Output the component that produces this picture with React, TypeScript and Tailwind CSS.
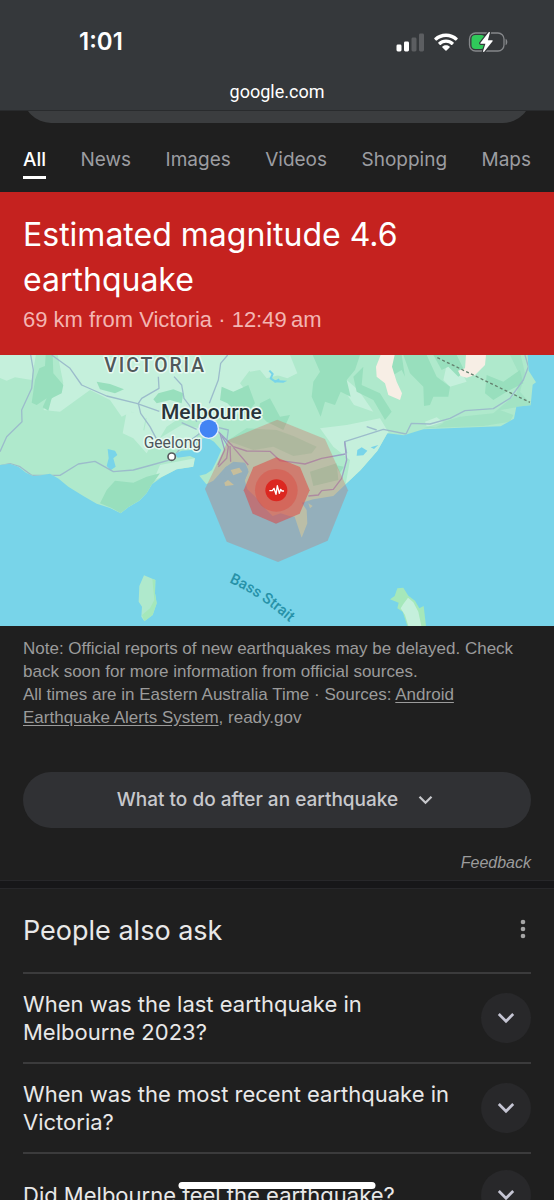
import React from "react";

const tabs = ["All", "News", "Images", "Videos", "Shopping", "Maps"];

const questions = [
  "When was the last earthquake in Melbourne 2023?",
  "When was the most recent earthquake in Victoria?",
  "Did Melbourne feel the earthquake?",
];

function Chevron({ className }: { className: string }) {
  return (
    <svg viewBox="0 0 18 12" className={className} fill="none" stroke="currentColor" strokeWidth="2.7" aria-hidden="true">
      <path d="M1.8 2 9 9.3 16.2 2" />
    </svg>
  );
}

function StatusIcons() {
  return (
    <div className="flex items-center gap-2.5">
      <svg viewBox="0 0 28 19" className="h-[19px] w-7" aria-hidden="true">
        <rect x="0.500" y="11.5" width="5" height="7" rx="1.4" fill="#fff" />
        <rect x="8" y="8.5" width="5" height="10" rx="1.4" fill="#fff" />
        <rect x="15.500" y="4.5" width="5" height="14" rx="1.4" fill="#5c5e61" />
        <rect x="23" y="0.5" width="5" height="18" rx="1.4" fill="#5c5e61" />
      </svg>
      <svg viewBox="0 0 24 18" className="h-[18px] w-6" fill="#fff" aria-hidden="true">
        <path d="M12 .6C7.5.6 3.400 2.300.4 5.100c-.3.3-.3.600 0 .9l1.500 1.500c.2.2.6.2.9 0C5.300 5.200 8.500 3.900 12 3.900s6.700 1.300 9.200 3.600c.3.2.7.2.9 0L23.600 6c.3-.3.3-.6 0-.9C20.600 2.300 16.500.6 12 .6z" />
        <path d="M12 6.400c-3 0-5.700 1.100-7.700 3-.3.3-.3.600 0 .9l1.600 1.600c.2.2.6.2.9 0C8.200 10.600 10 9.800 12 9.800s3.800.8 5.200 2.100c.3.2.7.2.9 0l1.600-1.600c.3-.3.3-.6 0-.9-2-1.900-4.700-3-7.700-3z" />
        <path d="M12 12.200c-1.400 0-2.600.5-3.600 1.300-.3.3-.3.600 0 .9l3.100 3.100c.3.3.7.3 1 0l3.100-3.100c.3-.3.3-.6 0-.9-1-.8-2.200-1.300-3.600-1.300z" />
      </svg>
      <svg viewBox="0 0 40 20" className="h-5 w-10" aria-hidden="true">
        <rect x="1.500" y="1" width="34.500" height="18" rx="6" fill="none" stroke="#85878a" strokeWidth="1.300" />
        <path d="M37.600 6.800c1.100.5 1.700 1.700 1.700 3.200s-.6 2.700-1.700 3.200z" fill="#85878a" />
        <rect x="3.500" y="3" width="13.500" height="14" rx="4" fill="#30c85a" />
        <path d="M20.700.2 12.500 10.800c-.4.500-.1 1 .5 1h4.400l-2.300 7.200c-.3.900.6 1.300 1.100.7l8.400-10.500c.4-.5.1-1-.5-1h-4.200L21.800 1C22.100.1 21.300-.4 20.700.2z" fill="#fff" stroke="#35383b" strokeWidth="2.400" paintOrder="stroke" />
      </svg>
    </div>
  );
}

function QuakeMap() {
  return (
    <svg
      viewBox="0 15 1662 813"
      className="block h-auto w-full bg-[#78d4e9]"
      role="img"
      aria-label="Map of Victoria"
      fontFamily="Roboto, sans-serif"
      strokeLinejoin="round"
    >
      <defs>
        <clipPath id="land">
          <path d="M0 0V345L30 341 55 350 78 368 100 378 122 376 150 371 176 386 205 410 250 438 290 461 330 474 362 490 385 472 418 452 440 430 456 403 485 382 530 358 580 350 585 325 570 318 533 323 524 312 545 302 578 300 592 270 620 262 642 275 664 300 650 332 636 360 618 372 598 377 619 403 640 392 676 352 700 335 733 338 746 365 734 390 742 418 766 440 790 470 818 498 842 490 868 498 884 500 905 563 922 520 920 480 905 458 940 448 1000 438 1037 403 1082 360 1132 303 1162 250 1212 256 1270 238 1382 233 1502 229 1542 206 1549 170 1592 166 1598 104 1608 97 1586 62 1582 0Z" />
        </clipPath>
      </defs>
      <g clipPath="url(#land)">
        <rect x="0" y="0" width="1662" height="600" fill="#afe9cc" />
        <g fill="#c5f0dc">
          <path d="M0 0H110L95 90 45 82 20 92 0 84Z" />
          <path d="M170 0H720L750 60 720 100 760 150 720 190 650 200 560 190 500 230 470 280 430 255 440 205 395 185 365 200 330 150 270 120 180 185 130 180 160 140 190 100Z" />
          <path d="M380 185 440 190 430 240 465 265 440 310 400 265 368 250Z" />
          <path d="M545 225 600 235 580 290 520 300 470 270Z" />
          <path d="M480 345 585 325 580 352 530 360 460 392Z" />
          <path d="M720 15H850L838 75 800 85 780 60 750 65Z" />
          <path d="M822 15H870L892 70 862 85 830 75Z" />
          <path d="M1040 90 1075 120 1120 185 1062 165 1036 125Z" />
          <path d="M960 235 1040 225 1140 205 1166 248 1135 300 1080 365 1037 403 1050 330 1000 290Z" />
          <path d="M1275 215 1310 202 1332 218 1308 232 1280 228Z" />
          <path d="M1340 45 1380 60 1400 95 1350 110 1330 90Z" />
        </g>
        <g fill="#98dfbd">
          <path d="M137 15H158L160 70 190 105 185 130 155 145 145 182 128 172 140 145 110 165 95 158 105 90 118 55 135 48Z" />
          <path d="M290 95 330 102 372 118 345 130 300 118Z" />
          <path d="M475 130 520 118 550 130 545 160 510 150 470 160 460 148Z" />
          <path d="M665 110 700 125 745 105 765 160 745 185 705 182 682 160 660 150Z" />
          <path d="M345 392 400 398 440 380 480 370 455 405 440 430 418 452 385 472 362 490 335 474 300 460 320 420Z" />
          <path d="M780 160 810 145 840 200 870 195 850 240 800 215 775 190Z" />
          <path d="M938 15H1080L1065 60 1040 90 1052 140 1022 125 1005 165 975 155 962 200 935 140 940 95 960 65Z" />
          <path d="M1060 80 1090 50 1085 105 1140 130 1175 185 1155 210 1120 150 1070 125Z" />
          <path d="M1160 15 1205 15 1215 80 1205 60 1180 75Z" />
          <path d="M1210 15H1280L1310 80 1350 110 1345 140 1300 140 1290 165 1272 168 1270 110 1230 70Z" />
          <path d="M1300 15H1370L1395 65 1375 80 1345 50 1325 60Z" />
          <path d="M1460 75 1510 95 1560 60 1570 100 1520 125 1480 150 1455 130Z" />
          <path d="M1530 15H1562L1575 70 1560 125 1595 165 1550 172 1500 180 1540 195 1530 215 1450 228 1382 230 1270 235 1380 200 1480 190 1550 130 1562 80Z" opacity=".55" />
          <path d="M682 272 740 235 830 240 880 258 950 290 935 310 880 318 820 290 760 300Z" opacity=".8" />
          <path d="M930 365 1010 340 1015 390 940 408Z" />
          <path d="M1005 345 1032 350 1020 368Z" />
        </g>
        <g fill="#f7eee5">
          <path d="M1142 15H1184L1176 50 1190 95 1206 130 1200 150 1165 135 1155 100 1130 80 1128 50Z" />
          <path d="M1398 15H1458L1455 45 1425 75 1400 83 1382 78 1374 62 1395 55Z" />
        </g>
        <g fill="#78d4e9">
          <path d="M323 297 345 302 352 315 340 325 347 350 332 361 320 348 326 325Z" />
          <path d="M1072 300 1085 292 1102 302 1090 316 1070 317Z" />
          <path d="M1112 292 1135 285 1122 297Z" />
          <path d="M822 90 862 92 850 98 822 97Z" />
        </g>
        <path d="M808 62 818 72 812 85 826 95 838 88" fill="none" stroke="#78d4e9" strokeWidth="6" />
        <g fill="none" stroke="#9cbccb" strokeWidth="4">
          <path d="M92 15 100 60 95 115 65 180 66 215 20 260 0 305" />
          <path d="M155 15 210 55 245 105 320 138 410 160 478 184" />
          <path d="M475 80 477 115 425 145 415 160 422 190 450 230 470 268" />
          <path d="M522 80 545 105 552 145 575 175 590 215" />
          <path d="M683 15 662 40 655 90 628 160" />
          <path d="M0 347 30 341 60 350 95 376 180 376 235 342 285 334 340 365 400 360 455 345 515 328 545 290 600 250" />
          <path d="M545 218 590 238M645 230 685 240 680 275" />
          <path d="M1040 310 1034 275 1150 238 1218 252 1234 220 1290 222 1350 205 1395 182 1480 176 1530 145 1570 90 1585 50 1575 15" />
          <path d="M1100 230 1130 240" />
        </g>
        <g fill="none" stroke="#9c9fc4" strokeWidth="4">
          <path d="M650 240 700 290 740 303 810 304 840 332 915 342 965 325 1036 312" />
          <path d="M1034 275 1040 330 1025 385 1000 418 965 422 955 435 925 438" />
          <path d="M665 258 685 290 680 325 655 350" />
          <path d="M660 250 674 300 654 345M690 288 692 335M700 292 745 345" />
        </g>
      </g>

      <path d="M676 352 700 340 735 338 745 360 732 400 700 380 672 388Z" fill="#78d4e9" />
      <path d="M692 360 718 353 727 366 700 376ZM673 398 684 390 702 405 676 408Z" fill="#c0e9bc" />
      <path d="M925 460 938 468 930 475ZM778 410 790 432 770 425Z" fill="#afe9cc" />
      <path d="M1312 23 1590 157" fill="none" stroke="#64816f" strokeWidth="4" strokeDasharray="9 7" />

      <path d="M432 676 466 690 465 730 470 760 458 795 433 814 424 800 426 770 416 755 418 708Z" fill="#afe9cc" />
      <path d="M457 686 466 690 465 730 470 760 458 795 433 814 426 795 450 775 463 750Z" fill="#a5e8ba" />
      <path d="M1192 715 1210 713 1225 737 1245 752 1258 775 1271 768 1278 828H1222L1208 785 1192 775 1196 758 1170 748 1184 738Z" fill="#a5e8ba" />
      <path d="M1224 743 1240 757 1255 785 1264 828H1225L1215 795 1202 775 1210 762Z" fill="#c5f0dc" />

      <path d="M832 209 975 267 1044 421 983 572 834 636 680 575 615 417 685 270Z" fill="#d8574c" fillOpacity=".29" />
      <path d="M829 322 900 351 929 421 899 491 828 521 758 491 731 421 760 351Z" fill="#e33b39" fillOpacity=".5" />
      <circle cx="829" cy="421" r="64" fill="#df4038" fillOpacity=".36" />
      <circle cx="829" cy="421" r="33" fill="#dc2720" />
      <path d="M808 422H817L822 415 828 433 832 407 838 430 842 418 846 423H852" fill="none" stroke="#fff" strokeWidth="4" />

      <g stroke="#e8faf2" strokeWidth="9" paintOrder="stroke">
        <text x="313" y="67" fontSize="58" fontWeight="500" letterSpacing="6" fill="#50585a">VICTORIA</text>
        <text x="483" y="206" fontSize="63" fontWeight="500" fill="#29343a">Melbourne</text>
        <text x="431" y="294" fontSize="47" fill="#4d565c">Geelong</text>
      </g>
      <circle cx="515" cy="320" r="11" fill="#fff" stroke="#56595c" strokeWidth="5" />
      <circle cx="626" cy="236" r="31" fill="#e5f0fb" />
      <circle cx="626" cy="236" r="27" fill="#4284f4" />
      <path id="strait" d="M687 697Q780 738 870 818" fill="none" />
      <text fontSize="45" fontWeight="500" fill="#2792a8">
        <textPath href="#strait">Bass Strait</textPath>
      </text>
    </svg>
  );
}

export default function App() {
  return (
    <div className="relative flex h-dvh flex-col overflow-hidden bg-[#1f1f1f] font-['Inter',sans-serif] text-[#e8e8e8]">
      <header className="shrink-0 border-b border-[#292b2d] bg-[#35383b] text-white">
        <div className="flex h-20 items-center justify-between pt-1 pr-[46px] pl-[79px]">
          <time className="text-[24px] leading-7 font-semibold">1:01</time>
          <StatusIcons />
        </div>
        <p className="h-[30px] text-center font-['Roboto',sans-serif] text-[18px] leading-6">google.com</p>
      </header>

      <main className="min-h-0 flex-1 overflow-hidden">
        <div className="flex h-3 items-end overflow-hidden px-[23px]">
          <div className="h-14 w-full shrink-0 rounded-full bg-[#3b3d3f]" />
        </div>
        <nav className="flex h-[69px] items-start justify-between px-[23px] pt-[23px] text-[19px] leading-7">
          {tabs.map((tab, i) => (
            <a
              key={tab}
              href="#"
              className={
                i === 0
                  ? "border-b-3 border-white pb-0.5 font-medium text-white"
                  : "text-[#9c9da1]"
              }
            >
              {tab}
            </a>
          ))}
        </nav>

        <section>
          <div className="bg-[#c5221f] px-[23px] pt-5 pb-[19px]">
            <h1 className="max-w-[420px] text-[32px] leading-[45px] text-white">
              Estimated magnitude 4.6 earthquake
            </h1>
            <p className="pt-0.5 font-['Liberation_Sans',sans-serif] text-[22px] leading-8 text-[#f3b5b2]">
              69 km from Victoria · 12:49&#8201;am
            </p>
          </div>
          <QuakeMap />
          <div className="px-[23px] pt-[11px] font-['Liberation_Sans',sans-serif] text-[#9b9b9b]">
            <p className="text-[17px] leading-[23px]">
              Note: Official reports of new earthquakes may be delayed. Check back soon for more information from
              official sources.
              <br />
              All times are in Eastern Australia Time · Sources:{" "}
              <a href="#" className="underline underline-offset-2">
                Android Earthquake Alerts System
              </a>
              , ready.gov
            </p>
            <button
              type="button"
              className="mt-[43px] flex h-14 w-full items-center justify-center gap-5 rounded-full bg-[#303134] pr-1 font-['Inter',sans-serif] text-[19px] font-medium text-[#c7c8cc]"
            >
              What to do after an earthquake
              <Chevron className="h-[10px] w-[15px]" />
            </button>
            <p className="pt-6 pb-[7px] text-right text-[16px] leading-[21px] italic">
              <a href="#">Feedback</a>
            </p>
          </div>
        </section>

        <div className="h-[9px] border-y border-[#27272a] bg-[#171719]" />

        <section className="px-[23px]">
          <div className="flex h-[83px] items-center justify-between">
            <h2 className="text-[27px] leading-9">People also ask</h2>
            <button type="button" aria-label="More options" className="flex w-4 justify-center pb-1 text-[#a5a5a5]">
              <svg viewBox="0 0 6 20" className="h-5 w-1.5" fill="currentColor" aria-hidden="true">
                <circle cx="3" cy="3" r="2.300" />
                <circle cx="3" cy="10" r="2.300" />
                <circle cx="3" cy="17" r="2.300" />
              </svg>
            </button>
          </div>
          <ul>
            {questions.map((question) => (
              <li key={question} className="border-t-2 border-[#3b3b3c]">
                <button type="button" className="flex w-full items-center justify-between py-4 text-left">
                  <span className="max-w-[440px] text-[22px] leading-7">{question}</span>
                  <span className="flex size-[50px] shrink-0 items-center justify-center rounded-full bg-[#28282a] text-[#c5c5d3]">
                    <Chevron className="h-3 w-[18px]" />
                  </span>
                </button>
              </li>
            ))}
          </ul>
        </section>
      </main>

      <div className="absolute bottom-[11px] left-1/2 h-[7px] w-[197px] -translate-x-1/2 rounded-full bg-white" />
    </div>
  );
}
